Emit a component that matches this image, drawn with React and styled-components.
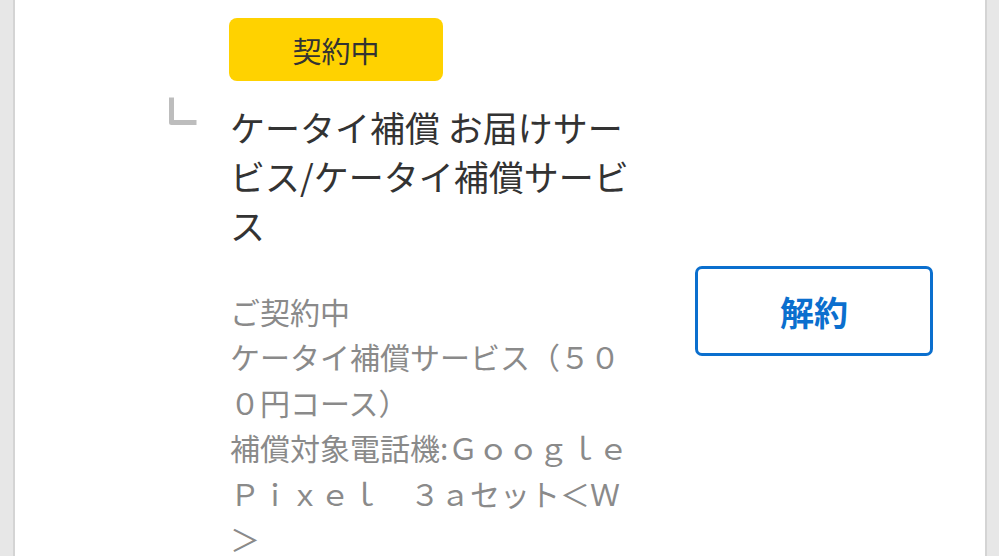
import React from "react";
import styled, { createGlobalStyle } from "styled-components";

const GlobalStyle = createGlobalStyle`
  html, body {
    margin: 0;
    padding: 0;
    background: #e7e7e7;
  }
  body {
    font-family: "Noto Sans CJK JP", "Noto Sans", sans-serif;
  }
`;

const Page = styled.div`
  height: 556px;
  overflow: hidden;
  padding: 0 12px 0 13px;
`;

const Card = styled.div`
  background: #fff;
  border-left: 2px solid #d4d4d4;
  border-right: 2px solid #d4d4d4;
  min-height: 100%;
  padding: 18px 0 0 154px;
`;

const Badge = styled.div`
  width: 214px;
  height: 63px;
  margin-left: 60px;
  border-radius: 8px;
  background: #ffd200;
  color: #333;
  font-size: 29px;
  display: flex;
  align-items: center;
  justify-content: center;
`;

const ItemRow = styled.div`
  display: flex;
  align-items: flex-start;
  gap: 31px;
  margin-top: 14px;
`;

const Corner = styled.svg`
  flex: none;
  width: 30px;
  height: 30px;
`;

const Main = styled.div`
  display: flex;
  flex-direction: column;
`;

const Title = styled.h2`
  margin: 0;
  padding-top: 7px;
  width: 412px;
  font-size: 35px;
  font-weight: 400;
  line-height: 49px;
  color: #333;
`;

const DetailRow = styled.div`
  display: flex;
  align-items: flex-start;
  gap: 53px;
  margin-top: 17px;
`;

const Details = styled.p`
  margin: 0;
  padding-top: 23px;
  width: 412px;
  font-size: 30px;
  line-height: 45.4px;
  color: #8a8a8a;
  word-break: break-all;
`;

const OutlineButton = styled.button`
  flex: none;
  width: 238px;
  height: 90px;
  border: 3px solid #0b6fce;
  border-radius: 7px;
  background: #fff;
  color: #0b6fce;
  font-family: inherit;
  font-size: 34px;
  font-weight: 700;
`;

export default function App() {
  return (
    <>
      <GlobalStyle />
      <Page>
        <Card>
          <Badge>契約中</Badge>
          <ItemRow>
            <Corner viewBox="0 0 30 30">
              <path
                d="M2.5 2.5 V27.5 H27.5"
                fill="none"
                stroke="#bdbdbd"
                strokeWidth="5"
                strokeLinejoin="round"
              />
            </Corner>
            <Main>
              <Title>ケータイ補償 お届けサービス/ケータイ補償サービス</Title>
              <DetailRow>
                <Details>
                  ご契約中
                  <br />
                  ケータイ補償サービス（５００円コース）
                  <br />
                  補償対象電話機:Ｇｏｏｇｌｅ　Ｐｉｘｅｌ　３ａセット＜Ｗ＞
                </Details>
                <OutlineButton>解約</OutlineButton>
              </DetailRow>
            </Main>
          </ItemRow>
        </Card>
      </Page>
    </>
  );
}
